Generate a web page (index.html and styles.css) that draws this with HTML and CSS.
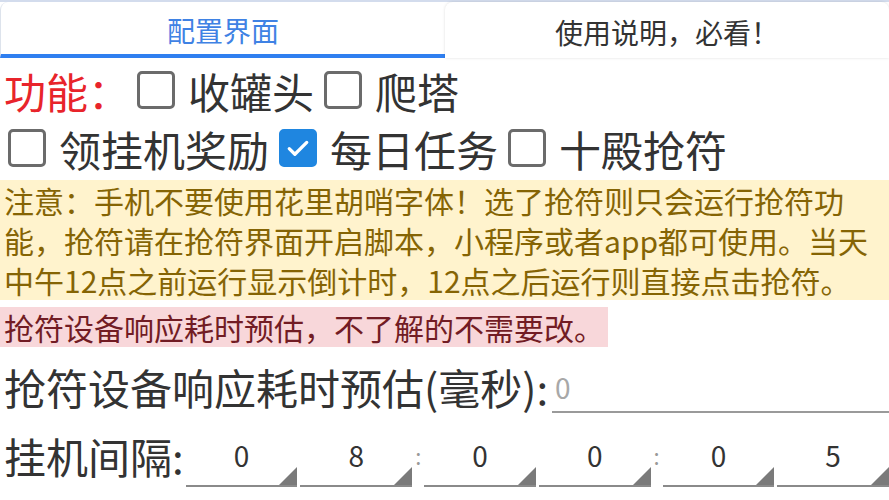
FILE: index.html
```html
<!DOCTYPE html>
<html lang="zh-CN">
  <head>
    <meta charset="utf-8" />
    <meta name="viewport" content="width=device-width, initial-scale=1" />
    <title>配置界面</title>
    <link rel="stylesheet" href="styles.css">
  </head>
  <body>
    <div class="tabs">
      <div class="tab tab-active">配置界面</div>
      <div class="tab">使用说明，必看！</div>
    </div>

    <div class="row row-first">
      <span class="label-red">功能：</span>
      <label class="check"><span class="box"></span>收罐头</label>
      <label class="check"><span class="box"></span>爬塔</label>
    </div>
    <div class="row row-second">
      <label class="check"><span class="box"></span>领挂机奖励</label>
      <label class="check"><span class="box box-checked">
        <svg viewBox="0 0 24 24" width="30" height="30">
          <path d="M5 12.5l4.5 4.5L19 7.5" fill="none" stroke="#fff" stroke-width="2.6" stroke-linecap="round" stroke-linejoin="round" />
        </svg>
      </span>每日任务</label>
      <label class="check"><span class="box"></span>十殿抢符</label>
    </div>

    <div class="alert-warning">
      注意：手机不要使用花里胡哨字体！选了抢符则只会运行抢符功能，抢符请在抢符界面开启脚本，小程序或者app都可使用。当天中午12点之前运行显示倒计时，12点之后运行则直接点击抢符。
    </div>
    <div class="alert-danger-wrap">
      <span class="alert-danger">抢符设备响应耗时预估，不了解的不需要改。</span>
    </div>

    <div class="row row-input">
      <span class="label">抢符设备响应耗时预估(毫秒):</span>
      <div class="text-input">0</div>
    </div>

    <div class="row row-spin">
      <span class="label">挂机间隔:</span>
      <div class="spinners">
        <div class="spin">0</div>
        <div class="spin">8</div>
        <span class="colon">:</span>
        <div class="spin">0</div>
        <div class="spin">0</div>
        <span class="colon">:</span>
        <div class="spin">0</div>
        <div class="spin">5</div>
      </div>
    </div>

    <div class="row row-more">
      <span class="label">每次挂机后执行任务的间隔时间</span>
    </div>
  </body>
</html>
```

FILE: styles.css
```css
html, body {
  margin: 0;
  padding: 0;
  overflow: hidden;
}

body {
  width: 889px;
  height: 500px;
  background-color: #ffffff;
  font-family: "Noto Sans CJK SC", "Noto Sans", sans-serif;
  color: #333333;
}

.tabs {
  display: flex;
  height: 56px;
  border-top: 2px solid #d3dced;
}

.tab {
  flex: 1;
  display: flex;
  justify-content: center;
  align-items: center;
  padding-top: 4px;
  font-size: 28px;
  color: #333333;
  background-color: #ffffff;
  border-top-left-radius: 8px;
  border-top-right-radius: 8px;
  box-shadow: 0 0 3px #00000022;
}

.tab-active {
  color: #3f82e4;
  border-bottom: 4px solid #2f7ff0;
  border-left: 1px solid #dde3ec;
  box-shadow: none;
}

.row {
  display: flex;
  align-items: center;
  font-size: 42px;
  padding-left: 4px;
  white-space: nowrap;
}

.label {
  flex-shrink: 0;
}

.row-first {
  height: 64px;
}

.row-second {
  height: 52px;
  padding-left: 8px;
}

.label-red {
  color: #e8242b;
  width: 133px;
}

.check {
  display: flex;
  align-items: center;
  margin-right: 10px;
}

.box {
  display: flex;
  justify-content: center;
  align-items: center;
  box-sizing: border-box;
  width: 38px;
  height: 38px;
  border: 3px solid #6b6b6b;
  border-radius: 5px;
  margin-right: 13px;
}

.box-checked {
  background-color: #1f86e0;
  border-color: #1f86e0;
}

.alert-warning {
  margin-top: 6px;
  padding: 0 14px 0 4px;
  background-color: #fff3cd;
  color: #856404;
  font-size: 30px;
  line-height: 40px;
}

.alert-danger-wrap {
  margin-top: 7px;
}

.alert-danger {
  display: inline-block;
  padding: 0 4px;
  background-color: #f8d7da;
  color: #721c24;
  font-size: 30px;
  line-height: 40px;
}

.row-input {
  height: 72px;
  align-items: flex-end;
}

.row-input .label {
  line-height: 64px;
}

.text-input {
  flex: 1;
  margin-left: 4px;
  padding-left: 3px;
  font-size: 28px;
  line-height: 48px;
  color: #a8a8a8;
  border-bottom: 2px solid #9a9a9a;
  margin-bottom: 6px;
}

.row-spin {
  height: 72px;
}

.spinners {
  display: flex;
  align-items: flex-end;
  flex: 1;
  height: 64px;
  margin-left: 2px;
}

.spin {
  position: relative;
  flex: 1;
  height: 56px;
  margin-right: 3px;
  box-sizing: border-box;
  border-bottom: 2px solid #8a8a8a;
  text-align: center;
  font-size: 28px;
  line-height: 48px;
  color: #333333;
}

.spin:last-child {
  margin-right: 0;
}

.spin::after {
  content: "";
  position: absolute;
  right: 0;
  bottom: 0;
  width: 0;
  height: 0;
  border-left: 18px solid transparent;
  border-bottom: 18px solid #7a7a7a;
}

.colon {
  align-self: center;
  font-size: 22px;
  color: #9a9a9a;
  width: 6px;
  margin-right: 3px;
}

.row-more {
  height: 50px;
  align-items: flex-start;
}
```
